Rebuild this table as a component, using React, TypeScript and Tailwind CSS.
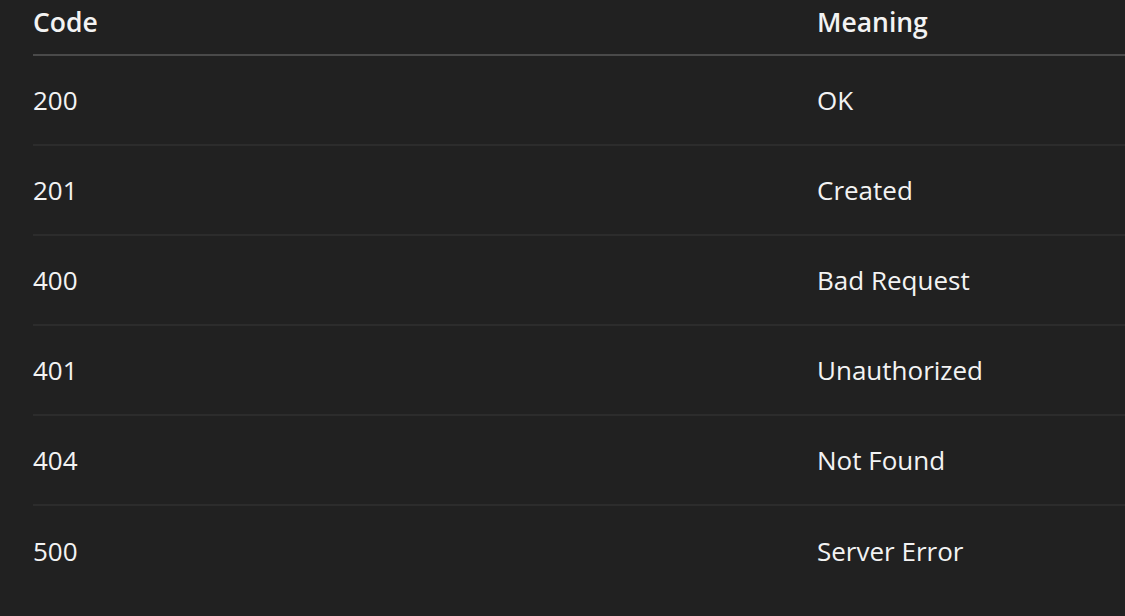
const rows = [
  { code: "200", meaning: "OK" },
  { code: "201", meaning: "Created" },
  { code: "400", meaning: "Bad Request" },
  { code: "401", meaning: "Unauthorized" },
  { code: "404", meaning: "Not Found" },
  { code: "500", meaning: "Server Error" },
];

export default function App() {
  return (
    <div
      className="h-[616px] w-full overflow-hidden bg-[#212121] text-[#f3f3f3]"
      style={{ fontFamily: '"Open Sans", "Noto Sans", sans-serif' }}
    >
      <div className="ml-[33px] w-[1200px]">
        {/* header */}
        <div className="flex h-[56px] border-b-2 border-[#4a4a4a] text-[26.5px] font-semibold leading-none">
          <div className="w-[784px] pt-[9px]">Code</div>
          <div className="flex-1 pt-[9px]">Meaning</div>
        </div>
        {rows.map((r, i) => (
          <div
            key={r.code}
            className={`flex h-[90px] items-center text-[26px] ${i < rows.length - 1 ? "border-b-2 border-[#2c2c2c]" : ""}`}
          >
            <div className="w-[784px]">{r.code}</div>
            <div className="flex-1">{r.meaning}</div>
          </div>
        ))}
      </div>
    </div>
  );
}
